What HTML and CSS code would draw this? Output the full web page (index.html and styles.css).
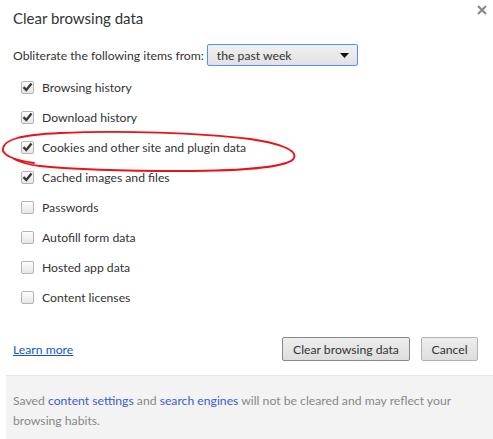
FILE: index.html
```html
<!DOCTYPE html>
<html>
<head>
<meta charset="utf-8">
<link rel="stylesheet" href="styles.css">
</head>
<body>
<div class="dialog">
  <div class="title">Clear browsing data</div>
  <div class="close" aria-label="Close">
    <svg width="10" height="10" viewBox="0 0 10 10"><path d="M1 1 L9 9 M9 1 L1 9" stroke="#8a8a8a" stroke-width="2.2"/></svg>
  </div>
  <div class="from-row">
    <span>Obliterate the following items from:</span>
    <div class="select">
      <span>the past week</span>
      <svg class="arrow" width="9" height="5" viewBox="0 0 9 5"><path d="M0 0 H9 L4.5 5 Z" fill="#111"/></svg>
    </div>
  </div>
  <div class="list">
    <div class="row"><span class="cb checked"><svg width="11" height="10" viewBox="0 0 11 10"><path d="M1.5 5.2 L4.3 8 L9.5 1.5" fill="none" stroke="#3a3a3a" stroke-width="2.4"/></svg></span><span>Browsing history</span></div>
    <div class="row"><span class="cb checked"><svg width="11" height="10" viewBox="0 0 11 10"><path d="M1.5 5.2 L4.3 8 L9.5 1.5" fill="none" stroke="#3a3a3a" stroke-width="2.4"/></svg></span><span>Download history</span></div>
    <div class="row"><span class="cb checked"><svg width="11" height="10" viewBox="0 0 11 10"><path d="M1.5 5.2 L4.3 8 L9.5 1.5" fill="none" stroke="#3a3a3a" stroke-width="2.4"/></svg></span><span>Cookies and other site and plugin data</span></div>
    <div class="row"><span class="cb checked"><svg width="11" height="10" viewBox="0 0 11 10"><path d="M1.5 5.2 L4.3 8 L9.5 1.5" fill="none" stroke="#3a3a3a" stroke-width="2.4"/></svg></span><span>Cached images and files</span></div>
    <div class="row"><span class="cb"></span><span>Passwords</span></div>
    <div class="row"><span class="cb"></span><span>Autofill form data</span></div>
    <div class="row"><span class="cb"></span><span>Hosted app data</span></div>
    <div class="row"><span class="cb"></span><span>Content licenses</span></div>
  </div>
  <div class="actions">
    <a class="learn" href="#">Learn more</a>
    <div class="buttons">
      <button class="btn primary">Clear browsing data</button>
      <button class="btn cancel">Cancel</button>
    </div>
  </div>
  <div class="footer">
    <p class="note">Saved <a href="#">content settings</a> and <a href="#">search engines</a> will not be cleared and may reflect your browsing habits.</p>
  </div>
  <svg class="scribble" width="300" height="50" viewBox="0 0 300 50">
    <path d="M34 35 C14 32, 1 27, 3 20 C5 12, 18 7, 60 5 C120 2, 200 5, 250 11 C278 15, 298 22, 294 30 C290 38, 250 43, 180 43 C120 43, 70 41, 40 38 C30 37, 20 34, 14 31" fill="none" stroke="#e8141a" stroke-width="1.8" stroke-linecap="round"/>
  </svg>
</div>
</body>
</html>
```
FILE: styles.css
```css
html, body {
  margin: 0;
  padding: 0;
  background: #fff;
  overflow: hidden;
}
body {
  font-family: Lato, "Open Sans", "Liberation Sans", sans-serif;
  color: #333;
  font-size: 12.2px;
}
.dialog {
  position: relative;
  width: 493px;
  height: 439px;
}
.title {
  padding: 8px 0 0 13px;
  font-size: 15px;
  line-height: 20px;
  color: #333;
}
.close {
  position: absolute;
  top: 5px;
  right: 6px;
  width: 10px;
  height: 10px;
}
.close svg { display: block; }
.from-row {
  margin-top: 15px;
  padding-left: 13px;
  display: flex;
  align-items: center;
  height: 24px;
  gap: 3px;
}
.select {
  width: 151px;
  height: 22px;
  box-sizing: border-box;
  border: 1px solid #4d90fe;
  border-radius: 2px;
  background: linear-gradient(#f1f1f1, #e1e1e1);
  display: flex;
  align-items: center;
  justify-content: space-between;
  padding: 0 8px 0 9px;
}
.arrow { display: block; }
.list {
  margin-top: 5px;
}
.row {
  height: 30px;
  display: flex;
  align-items: center;
  padding-left: 21px;
  gap: 8px;
}
.cb {
  width: 13px;
  height: 13px;
  box-sizing: border-box;
  border: 1px solid #b4b4b4;
  border-radius: 2px;
  background: linear-gradient(#fdfdfd, #e6e6e6);
  display: flex;
  align-items: center;
  justify-content: center;
}
.cb svg { display: block; }
.actions {
  margin-top: 25px;
  height: 24px;
  display: flex;
  align-items: center;
  justify-content: space-between;
  padding: 0 15px 0 13px;
}
.learn {
  color: #1155cc;
  text-decoration: underline;
}
.buttons {
  display: flex;
  gap: 11px;
}
.btn {
  font-family: inherit;
  font-size: 12.2px;
  color: #333;
  height: 24px;
  box-sizing: border-box;
  border: 1px solid #b2b2b2;
  border-radius: 2px;
  background: linear-gradient(#ededed, #dedede);
  padding: 0;
  margin: 0;
  white-space: nowrap;
}
.btn.primary {
  border-color: #888;
  width: 128px;
}
.btn.cancel { width: 57px; }
.footer {
  margin: 14px 0 0 6px;
  border-top: 1px solid #e6e6e6;
  background: #f3f3f3;
  padding: 15px 20px 10px 7px;
  color: #888;
}
.note {
  margin: 0;
  line-height: 20px;
}
.footer a {
  color: #3b5ccf;
  text-decoration: none;
}
.scribble {
  position: absolute;
  left: 0;
  top: 128px;
}
```
